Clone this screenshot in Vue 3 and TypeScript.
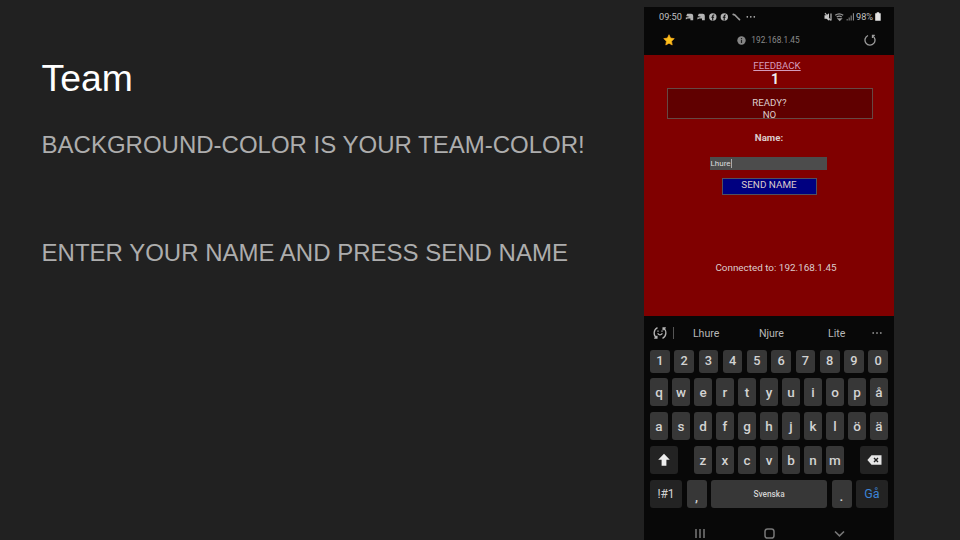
<script setup lang="ts">
const numbers: string[] = [...'1234567890']
const top: string[] = [...'qwertyuiopå']
const middle: string[] = [...'asdfghjklöä']
const bottom: string[] = [...'zxcvbnm']
const suggestions: string[] = ['Lhure', 'Njure', 'Lite']
</script>

<template>
  <main class="slide">
    <section class="copy">
      <h1>Team</h1>
      <p>BACKGROUND-COLOR IS YOUR TEAM-COLOR!</p>
      <p>ENTER YOUR NAME AND PRESS SEND NAME</p>
    </section>

    <section class="phone">
      <header class="status">
        <span class="time">09:50</span>
        <svg class="notices" width="74" height="10" viewBox="0 0 74 10">
          <g fill="#b4b4b4">
            <path d="M2.200 1.800h4q2 0 2 2v4.400H5.400V6.600H2.600L.8 7.400V5.400l3.800-.5-3.400-.9z" />
            <path d="M13.800 1.800h4q2 0 2 2v4.400H17V6.600h-2.800l-1.800.8V5.400l3.800-.5-3.400-.9z" />
            <circle cx="27.800" cy="5" r="3.700" />
            <circle cx="39.300" cy="5" r="3.700" />
            <circle cx="62.300" cy="4.800" r=".85" />
            <circle cx="65.800" cy="4.800" r=".85" />
            <circle cx="69.300" cy="4.800" r=".85" />
          </g>
          <path d="M29.300 3h-.7q-.9 0-.9 1v4.500M26.300 5.300h2.800M40.800 3h-.7q-.9 0-.9 1v4.500M37.800 5.300h2.800" fill="none" stroke="#111" stroke-width="1.100" />
          <path d="M48.200 2.400l1.600.6 3 3 1.700 1.700" fill="none" stroke="#999" stroke-width="1.700" stroke-linecap="round" />
        </svg>
        <svg class="radios" width="31" height="10" viewBox="0 0 31 10">
          <path d="M.5 3.300h2L5 1.200v7.600L2.500 6.700h-2z" fill="#ccc" />
          <path d="M1 1l5.500 7.500M7 1.500v7" stroke="#bbb" stroke-width="1.200" />
          <path d="M11.200 3.300q4-3 8 0M12.700 5.100q2.600-1.800 5 0M14.200 6.800l1.500 1.500 1.500-1.500z" fill="none" stroke="#999" stroke-width="1.200" />
          <path d="M23.200 8.500v-1.500M25.200 8.500V5.500M27.200 8.500V3.500" stroke="#777" stroke-width="1.200" />
          <path d="M29.400 8.500V1.200" stroke="#999" stroke-width="1" />
        </svg>
        <span class="percent">98%</span>
        <svg width="6" height="9" viewBox="0 0 6 9"><path d="M1.700.3h2.500v1h1.500v7.500H.2V1.300h1.500z" fill="#e4e4e4" /></svg>
      </header>

      <div class="address">
        <svg width="12" height="12" viewBox="0 0 12 12"><path d="M6 .7l1.600 3.400 3.700.5-2.700 2.600.6 3.800L6 9.200 2.800 11l.6-3.800L.7 4.600l3.700-.5z" fill="#fcc21b" stroke="#f5a51d" stroke-width=".7" stroke-linejoin="round" /></svg>
        <div class="url">
          <svg width="9" height="9" viewBox="0 0 9 9"><circle cx="4.500" cy="4.500" r="4.200" fill="#858585" /><path d="M4.500 2v1.200M4.500 4v3" stroke="#222" stroke-width="1.200" /></svg>
          <span>192.168.1.45</span>
        </div>
        <svg width="12" height="12" viewBox="0 0 12 12"><path d="M8.400 1.700A5 5 0 1 1 4 1.500M8.500 4V1.400h2.300" fill="none" stroke="#9c9c9c" stroke-width="1.300" /></svg>
      </div>

      <div class="page">
        <a class="feedback">FEEDBACK</a>
        <strong class="player">1</strong>
        <div class="ready"><span>READY?</span><span>NO</span></div>
        <strong class="label">Name:</strong>
        <div class="field"><span>Lhure</span><i class="caret"></i></div>
        <div class="send">SEND NAME</div>
        <div class="connected">Connected to: 192.168.1.45</div>
      </div>

      <div class="keyboard">
        <div class="suggest">
          <svg width="14" height="14" viewBox="0 0 14 14" fill="none" stroke="#b5b5b5" stroke-width="1.300">
            <path d="M4.500 1.700A6 6 0 0 0 3.700 12M1.200 12.200h2.700V9.800M9.500 12.300A6 6 0 0 0 10.300 2M12.800 1.800h-2.700v2.400" />
            <path d="M4.600 7.300q2.400 3 4.800 0" /><path d="M5 4.600v1.200M9 4.600v1.200" />
          </svg>
          <i class="divider"></i>
          <span v-for="word in suggestions" :key="word" class="word">{{ word }}</span>
          <svg class="more" width="10" height="4" viewBox="0 0 10 4" fill="#858585"><circle cx="1.200" cy="2" r=".95" /><circle cx="5" cy="2" r=".95" /><circle cx="8.800" cy="2" r=".95" /></svg>
        </div>
        <div class="row digits"><span v-for="k in numbers" :key="k" class="key">{{ k }}</span></div>
        <div class="row"><span v-for="k in top" :key="k" class="key">{{ k }}</span></div>
        <div class="row"><span v-for="k in middle" :key="k" class="key">{{ k }}</span></div>
        <div class="row shift-row">
          <span class="key dark wide">
            <svg width="14" height="14" viewBox="0 0 14 14"><path d="M7 .8l5.800 6H9.400v6H4.600v-6H1.200z" fill="#eee" /></svg>
          </span>
          <div class="letters"><span v-for="k in bottom" :key="k" class="key">{{ k }}</span></div>
          <span class="key dark wide">
            <svg width="15" height="10" viewBox="0 0 15 10"><path d="M4.500.2h10v9.600h-10L.4 5z" fill="#e6e6e6" /><path d="M7 3l4 4M11 3L7 7" stroke="#222" stroke-width="1.400" /></svg>
          </span>
        </div>
        <div class="row last">
          <span class="key dark symbols">!#1</span>
          <span class="key low">,</span>
          <span class="key space">Svenska</span>
          <span class="key low">.</span>
          <span class="key dark go">Gå</span>
        </div>
        <nav class="nav">
          <svg width="10" height="11" viewBox="0 0 10 11"><path d="M1 1v9M5 1v9M9 1v9" stroke="#777" stroke-width="1.500" /></svg>
          <svg width="11" height="11" viewBox="0 0 11 11"><rect x="1" y="1" width="9" height="9" rx="2.600" fill="none" stroke="#777" stroke-width="1.500" /></svg>
          <svg width="11" height="11" viewBox="0 0 11 11"><path d="M1 3.500l4.500 4.300L10 3.500" fill="none" stroke="#777" stroke-width="1.600" /></svg>
        </nav>
      </div>
    </section>
  </main>
</template>

<style>
body { margin: 0; background: #212121; }
</style>

<style scoped>
* { box-sizing: border-box; }
.slide { width: 960px; height: 540px; overflow: hidden; background: #212121; display: flex; align-items: flex-start; }
.copy { width: 644px; padding: 57px 0 0 41.600px; font-family: "Liberation Sans", sans-serif; color: #adadad; white-space: nowrap; }
h1 { margin: 0; font-size: 37.330px; line-height: 43px; font-weight: 400; color: #fff; }
p { margin: 31px 0 0; font-size: 24px; line-height: 28px; }
p + p { margin-top: 80px; }
.phone { width: 250px; height: 533px; margin-top: 7px; background: #080808; font-family: Roboto, sans-serif; display: flex; flex-direction: column; color: #ddd; }
svg { display: block; flex: none; }
.status { height: 19px; padding: 0 13.500px 0 15px; display: flex; align-items: center; font-size: 9.200px; color: #c0c0c0; }
.time { width: 26px; }
.radios { margin-left: auto; margin-right: 1px; }
.percent { width: 18.500px; }
.address { height: 28.500px; padding: 0 18px 0 19px; display: flex; align-items: center; justify-content: space-between; }
.url { display: flex; align-items: center; gap: 5px; font-size: 8.250px; color: #8a8a8a; margin-right: 2px; }
.page { height: 261.500px; background: #800000; display: flex; flex-direction: column; align-items: center; font-size: 9.700px; color: #dccccc; }
.feedback { margin: 5px 0 0 16px; line-height: 12px; color: #d49cbc; text-decoration: underline; }
.player { margin-left: 12px; font-size: 14px; line-height: 15px; color: #eee; }
.ready { width: 206px; height: 31px; margin: 1.500px 0 0 1px; border: 1px solid #664844; background: #600000; padding-top: 8px; display: flex; flex-direction: column; align-items: center; line-height: 11.500px; }
.label { margin-top: 12.500px; line-height: 12px; }
.field { width: 117px; height: 13px; margin: 13px 2px 0 0; background: #4c4c4c; padding-left: 1px; display: flex; align-items: center; font-size: 8px; color: #ddd; }
.caret { width: 1px; height: 9px; background: #aaa; }
.send { width: 95px; height: 17px; margin-top: 8px; border: 1px solid #505060; background: #000080; text-align: center; line-height: 12px; font-size: 9.900px; }
.connected { margin: 66px 0 0 14px; line-height: 14px; font-size: 9.900px; }
.keyboard { flex: 1; display: flex; flex-direction: column; padding: 0 6px; gap: 6px; }
.suggest { height: 28px; display: flex; align-items: center; padding: 6px 6px 0 3px; color: #b8b8b8; font-size: 10.600px; }
.divider { width: 1px; height: 12px; margin-left: 5.500px; background: #555; }
.word { width: 65.300px; text-align: center; }
.more { margin-left: auto; }
.row { height: 28px; display: flex; gap: 4px; }
.digits { height: 23px; margin-bottom: -1px; gap: 4.600px; }
.digits .key { font-size: 12.800px; padding-bottom: 1px; }
.key { flex: 1; min-width: 0; border-radius: 3px; background: #373737; color: #d2d2d2; display: flex; align-items: center; justify-content: center; font-size: 13.500px; font-weight: 500; line-height: 16px; }
.dark { background: #232323; }
.wide { flex: 0 0 28px; }
.shift-row { justify-content: space-between; }
.letters { width: 150px; display: flex; gap: 4px; }
.last { gap: 4.500px; }
.symbols { flex: 0 0 32px; font-size: 12px; font-weight: 400; }
.low { flex: 0 0 20px; padding-top: 4px; }
.space { font-size: 8.300px; }
.go { flex: 0 0 32px; color: #3c84d6; font-size: 12.500px; font-weight: 400; }
.nav { height: 26px; display: flex; justify-content: space-between; padding: 13.500px 43.500px 0 45px; }
</style>
